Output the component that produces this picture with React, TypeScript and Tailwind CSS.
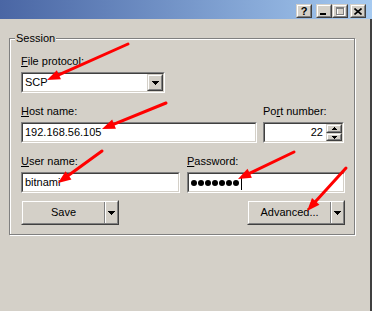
import React from 'react';

type Box = { className?: string; children?: React.ReactNode };

// sunken edit frame, win2000 classic
const Sunken: React.FC<Box> = ({ className = '', children }) => (
  <div className={`flex border border-t-[#808080] border-l-[#808080] border-r-white border-b-white ${className}`}>
    <div className="flex flex-1 min-w-0 items-center bg-white border border-t-[#404040] border-l-[#404040] border-r-[#d4d0c8] border-b-[#d4d0c8]">
      {children}
    </div>
  </div>
);

const Raised: React.FC<Box> = ({ className = '', children }) => (
  <div className={`flex border border-t-[#d4d0c8] border-l-[#d4d0c8] border-r-[#404040] border-b-[#404040] ${className}`}>
    <div className="flex flex-1 min-w-0 items-center justify-center bg-[#d4d0c8] border border-t-white border-l-white border-r-[#808080] border-b-[#808080]">
      {children}
    </div>
  </div>
);

const DownTri = () => (
  <svg width="7" height="4" className="block">
    <rect x="0" y="0" width="7" height="1" />
    <rect x="1" y="1" width="5" height="1" />
    <rect x="2" y="2" width="3" height="1" />
    <rect x="3" y="3" width="1" height="1" />
  </svg>
);

const SmallTri = ({ up }: { up?: boolean }) => (
  <svg width="5" height="3" className="block">
    {up ? (
      <>
        <rect x="2" y="0" width="1" height="1" />
        <rect x="1" y="1" width="3" height="1" />
        <rect x="0" y="2" width="5" height="1" />
      </>
    ) : (
      <>
        <rect x="0" y="0" width="5" height="1" />
        <rect x="1" y="1" width="3" height="1" />
        <rect x="2" y="2" width="1" height="1" />
      </>
    )}
  </svg>
);

const Label: React.FC<{ pre?: string; u: string; post: string }> = ({ pre = '', u, post }) => (
  <div className="h-[13px] mb-[4px] whitespace-nowrap">
    {pre}
    <span className="underline underline-offset-[1px]">{u}</span>
    {post}
  </div>
);

const SplitButton: React.FC<{ label: string; className?: string }> = ({ label, className = '' }) => (
  <Raised className={`h-[25px] ${className}`}>
    <div className="flex-1 h-full flex items-center justify-center">{label}</div>
    <div className="w-[1px] h-full bg-[#808080]" />
    <div className="w-[1px] h-full bg-white" />
    <div className="w-[11px] h-full flex items-center justify-center">
      <DownTri />
    </div>
  </Raised>
);

const TitleButton: React.FC<Box> = ({ className = '', children }) => (
  <Raised className={`w-[16px] h-[14px] ${className}`}>{children}</Raised>
);

const Arrow: React.FC<{ x1: number; y1: number; x2: number; y2: number }> = ({ x1, y1, x2, y2 }) => {
  const dx = x2 - x1;
  const dy = y2 - y1;
  const len = Math.hypot(dx, dy);
  const ux = dx / len;
  const uy = dy / len;
  const hl = 13;
  const hw = 5;
  const bx = x2 - ux * hl;
  const by = y2 - uy * hl;
  const pts = `${x2},${y2} ${bx - uy * hw},${by + ux * hw} ${bx + uy * hw},${by - ux * hw}`;
  return (
    <g>
      <line x1={x1} y1={y1} x2={bx + ux * 2} y2={by + uy * 2} stroke="#ff0000" strokeWidth="3" strokeLinecap="round" />
      <polygon points={pts} fill="#ff0000" />
    </g>
  );
};

export default function App() {
  return (
    <div className="relative w-[372px] h-[311px] overflow-hidden bg-[#d4d0c8] flex flex-col font-['Liberation_Sans',Arial,sans-serif] text-[11px] leading-[13px] text-black">
      {/* title bar */}
      <div className="h-[19px] flex items-start justify-end pt-[4px] pr-[6px] bg-gradient-to-r from-[#4a66a4] to-[#a6caf0]">
        <TitleButton>
          <span className="font-bold text-[11px] leading-[10px]">?</span>
        </TitleButton>
        <TitleButton className="ml-[4px]">
          <svg width="8" height="8" className="block">
            <rect x="0" y="6" width="6" height="2" />
          </svg>
        </TitleButton>
        <TitleButton>
          <svg width="9" height="9" className="block">
            <rect x="1.5" y="1.5" width="7" height="7" fill="none" stroke="#fff" />
            <rect x="0.5" y="0.5" width="7" height="7" fill="none" stroke="#808080" />
            <rect x="0" y="0" width="8" height="2" fill="#808080" />
          </svg>
        </TitleButton>
        <TitleButton className="ml-[2px]">
          <svg width="8" height="7" className="block">
            <path d="M0.5 0.5 L7.5 6.5 M7.5 0.5 L0.5 6.5" stroke="#000" strokeWidth="1.6" />
          </svg>
        </TitleButton>
      </div>

      <div className="flex flex-1">
        <div className="flex-1 pl-[9px] pt-[13px]">
          <fieldset className="w-[346px] border border-[#808080] shadow-[inset_1px_1px_0_#fff,1px_1px_0_#fff]">
            <legend className="ml-[5px] px-[1px] bg-[#d4d0c8] leading-[13px]">Session</legend>
            <div className="pl-[11px] pt-[10px] pb-[9px]">
              <Label u="F" post="ile protocol:" />
              <Sunken className="w-[144px] h-[21px]">
                <div className="flex-1 pl-[2px]">SCP</div>
                <Raised className="w-[16px] h-full">
                  <DownTri />
                </Raised>
              </Sunken>

              <div className="flex mt-[12px]">
                <div className="w-[236px]">
                  <Label u="H" post="ost name:" />
                  <Sunken className="h-[21px]">
                    <div className="pl-[2px]">192.168.56.105</div>
                  </Sunken>
                </div>
                <div className="w-[81px] ml-[6px]">
                  <Label pre="Po" u="r" post="t number:" />
                  <Sunken className="h-[21px]">
                    <div className="flex-1 text-right pr-[3px]">22</div>
                    <div className="flex flex-col w-[16px] h-full">
                      <Raised className="h-[9px]">
                        <SmallTri up />
                      </Raised>
                      <Raised className="h-[8px]">
                        <SmallTri />
                      </Raised>
                    </div>
                  </Sunken>
                </div>
              </div>

              <div className="flex mt-[12px]">
                <div className="w-[159px]">
                  <Label u="U" post="ser name:" />
                  <Sunken className="h-[21px]">
                    <div className="pl-[2px]">bitnami</div>
                  </Sunken>
                </div>
                <div className="w-[158px] ml-[7px]">
                  <Label u="P" post="assword:" />
                  <Sunken className="h-[21px]">
                    <div className="flex items-center gap-[1px] pl-[2px]">
                      {[0, 1, 2, 3, 4, 5, 6].map(i => (
                        <div key={i} className="w-[6px] h-[6px] rounded-full bg-black" />
                      ))}
                      <div className="w-[1px] h-[14px] bg-black ml-[1px]" />
                    </div>
                  </Sunken>
                </div>
              </div>

              <div className="flex mt-[7px]">
                <SplitButton label="Save" className="w-[98px]" />
                <SplitButton label="Advanced..." className="w-[98px] ml-[128px]" />
              </div>
            </div>
          </fieldset>
        </div>
        <div className="w-[2px] bg-[#404040]" />
      </div>

      <svg className="absolute inset-0 pointer-events-none" width="372" height="311">
        <Arrow x1={128} y1={44} x2={47} y2={80} />
        <Arrow x1={166} y1={103} x2={102} y2={129} />
        <Arrow x1={102} y1={151} x2={58} y2={183} />
        <Arrow x1={294} y1={152} x2={238} y2={179} />
        <Arrow x1={346} y1={168} x2={307} y2={211} />
      </svg>
    </div>
  );
}
